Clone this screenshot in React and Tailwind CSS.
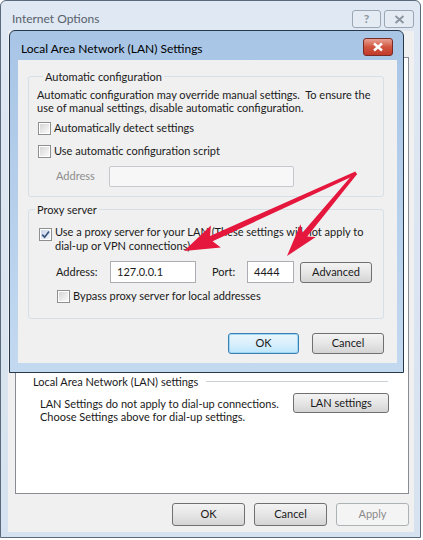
import React from "react";

const Checkbox = ({ checked }) => (
  <span className="flex w-[13px] h-[13px] shrink-0 border border-[#8e8f8f] bg-white p-px">
    <span
      className={
        checked
          ? "flex flex-1 items-center justify-center bg-gradient-to-br from-[#c9d6e8] to-[#f3f7fc]"
          : "flex flex-1 items-center justify-center bg-gradient-to-br from-[#d6d6d6] to-[#fafafa]"
      }
    >
      {checked && (
        <svg width="9" height="9" viewBox="0 0 9 9">
          <path d="M1.2 4.6 L3.6 7.2 L8 1.4" fill="none" stroke="#3d5580" strokeWidth="1.7" />
        </svg>
      )}
    </span>
  </span>
);

const Button = ({ children, className = "" }) => (
  <div
    className={
      "flex items-center justify-center rounded-[3px] border border-[#707070] bg-gradient-to-b from-[#f3f3f3] via-[#e6e6e6] to-[#d4d4d4] text-[#1a1a1a] " +
      className
    }
  >
    {children}
  </div>
);

function Arrow({ tail, tip, head, half, w0, w1 }) {
  const dx = tip[0] - tail[0];
  const dy = tip[1] - tail[1];
  const len = Math.hypot(dx, dy);
  const ux = dx / len;
  const uy = dy / len;
  const nx = -uy;
  const ny = ux;
  const bx = tip[0] - ux * head;
  const by = tip[1] - uy * head;
  const wx = bx - ux * 5;
  const wy = by - uy * 5;
  const p = (x, y) => `${x.toFixed(1)},${y.toFixed(1)}`;
  const pts = [
    p(tail[0] + nx * w0, tail[1] + ny * w0),
    p(bx + nx * w1, by + ny * w1),
    p(wx + nx * half, wy + ny * half),
    p(tip[0], tip[1]),
    p(wx - nx * half, wy - ny * half),
    p(bx - nx * w1, by - ny * w1),
    p(tail[0] - nx * w0, tail[1] - ny * w0),
  ].join(" ");
  return <polygon points={pts} fill="#e5173d" />;
}

export default function App() {
  return (
    <div className="relative w-[423px] h-[540px] bg-white font-['Lato',sans-serif] text-[11px] text-[#1a1a1a] whitespace-nowrap">
      {/* Internet Options (inactive, behind) */}
      <div className="flex flex-col w-[421px] h-[538px] border border-[#5b6a7a] rounded-t-[6px] bg-gradient-to-b from-[#dfe8f3] to-[#d6e2ef]">
        <div className="flex h-[30px] justify-between">
          <span className="mt-[9px] ml-[11px] text-[12px] text-[#58616b]">Internet Options</span>
          <div className="flex gap-[3px] mt-[9px] mr-[6px]">
            <div className="flex w-[29px] h-[18px] items-center justify-center rounded-[3px] border border-[#9aa6b3] bg-[#e4ebf3] text-[12px] font-bold text-[#8b96a2]">
              ?
            </div>
            <div className="flex w-[30px] h-[18px] items-center justify-center rounded-[3px] border border-[#9aa6b3] bg-[#e4ebf3]">
              <svg width="11" height="9" viewBox="0 0 11 9">
                <path d="M1.5 1 L9.5 8 M9.5 1 L1.5 8" stroke="#8b96a2" strokeWidth="2" />
              </svg>
            </div>
          </div>
        </div>
        <div className="flex flex-col ml-[7px] mr-[6px] h-[501px] bg-[#f0f0f0]">
          <div className="flex flex-col mt-[26px] ml-[7px] mr-[5px] h-[437px] border border-[#898c95] bg-white pt-[316px]">
            <div className="flex items-center pl-[17px] pr-[20px] leading-[15px]">
              <span>Local Area Network (LAN) settings</span>
              <span className="flex-1 h-px ml-[8px] bg-[#c9d1d8]" />
            </div>
            <div className="flex justify-between pl-[24px] pr-[19px] mt-[4px]">
              <div className="mt-[4px] leading-[13px]">
                <div>LAN Settings do not apply to dial-up connections.</div>
                <div>Choose Settings above for dial-up settings.</div>
              </div>
              <Button className="w-[96px] h-[20px]">LAN settings</Button>
            </div>
          </div>
          <div className="flex justify-end gap-[9px] mt-[9px] mr-[5px]">
            <Button className="w-[73px] h-[23px]">OK</Button>
            <Button className="w-[73px] h-[23px]">Cancel</Button>
            <div className="flex w-[73px] h-[23px] items-center justify-center rounded-[3px] border border-[#adb2b5] bg-[#f4f4f4] text-[#8a8a8a]">
              Apply
            </div>
          </div>
        </div>
      </div>

      {/* LAN Settings dialog (active, on top) */}
      <div className="absolute left-[9px] top-[30px] flex flex-col w-[395px] h-[343px] border border-[#27384a] rounded-t-[6px] bg-gradient-to-b from-[#a8c5e6] to-[#c3d9f0]">
        <div className="flex h-[29px] justify-between">
          <span className="mt-[9px] ml-[11px] text-[12px] text-black">Local Area Network (LAN) Settings</span>
          <div className="flex w-[30px] h-[18px] mt-[7px] mr-[10px] items-center justify-center rounded-[3px] border border-[#7a2a25] bg-gradient-to-b from-[#e8a093] via-[#d0553f] to-[#c1392a]">
            <svg width="12" height="10" viewBox="0 0 12 10">
              <path d="M2 1.5 L10 8.5 M10 1.5 L2 8.5" stroke="white" strokeWidth="2.4" />
            </svg>
          </div>
        </div>
        <div className="flex flex-col ml-[8px] mr-[6px] h-[303px] bg-[#f0f0f0] pl-[10px] pr-[13px]">
          <fieldset className="mt-[9px] border border-[#d5dfe5] rounded-[3px] pl-[8px] pb-[9px]">
            <legend className="ml-[6px] px-[2px] leading-[15px]">Automatic configuration</legend>
            <div className="mt-[4px] leading-[13px]">
              <div>Automatic configuration may override manual settings.&nbsp; To ensure the</div>
              <div>use of manual settings, disable automatic configuration.</div>
            </div>
            <div className="flex items-center gap-[3px] mt-[8px] ml-px h-[13px]">
              <Checkbox />
              <span>Automatically detect settings</span>
            </div>
            <div className="flex items-center gap-[3px] mt-[10px] ml-px h-[13px]">
              <Checkbox />
              <span>Use automatic configuration script</span>
            </div>
            <div className="flex items-center mt-[8px] pl-[19px]">
              <span className="w-[53px] text-[#8d8d8d]">Address</span>
              <div className="w-[185px] h-[21px] border border-[#c5c9ce] rounded-[2px] bg-[#f7f7f7]" />
            </div>
          </fieldset>

          <fieldset className="mt-[5px] border border-[#d5dfe5] rounded-[3px] pb-[15px]">
            <legend className="ml-[6px] px-[2px] leading-[15px]">Proxy server</legend>
            <div className="flex items-start gap-[3px] mt-[8px] pl-[10px]">
              <span className="mt-[3px]">
                <Checkbox checked />
              </span>
              <div className="leading-[14px]">
                <div>Use a proxy server for your LAN (These settings will not apply to</div>
                <div>dial-up or VPN connections).</div>
              </div>
            </div>
            <div className="flex items-center mt-[8px] pl-[27px]">
              <span className="w-[54px]">Address:</span>
              <div className="flex items-center w-[86px] h-[22px] border border-[#abadb3] bg-white pl-[6px]">127.0.0.1</div>
              <span className="w-[35px] ml-[16px]">Port:</span>
              <div className="flex items-center w-[47px] h-[22px] border border-[#abadb3] bg-white pl-[6px]">4444</div>
              <Button className="w-[72px] h-[21px] ml-[6px]">Advanced</Button>
            </div>
            <div className="flex items-center gap-[3px] mt-[7px] pl-[28px] h-[13px]">
              <Checkbox />
              <span>Bypass proxy server for local addresses</span>
            </div>
          </fieldset>

          <div className="flex justify-end gap-[13px] mt-[14px]">
            <div className="flex w-[71px] h-[21px] items-center justify-center rounded-[3px] border border-[#3c7fb1] bg-gradient-to-b from-[#eaf6fd] via-[#d9f0fc] to-[#bee6fd] shadow-[inset_0_0_0_1px_#9fd6f5]">
              OK
            </div>
            <Button className="w-[72px] h-[21px]">Cancel</Button>
          </div>
        </div>
      </div>

      {/* red annotation arrows */}
      <svg className="absolute left-0 top-0 pointer-events-none" width="423" height="540" viewBox="0 0 423 540">
        <Arrow tail={[356, 173]} tip={[184, 251]} head={30} half={12} w0={1.5} w1={3} />
        <Arrow tail={[356, 173]} tip={[287, 256]} head={28} half={10} w0={1.5} w1={3} />
      </svg>
    </div>
  );
}
